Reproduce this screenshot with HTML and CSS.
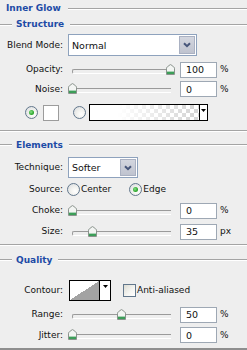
FILE: index.html
```html
<!DOCTYPE html>
<html>
<head>
<meta charset="utf-8">
<title>Inner Glow</title>
<link rel="stylesheet" href="styles.css">
</head>
<body>
<div class="panel">
  <div class="title"><span class="title-text">Inner Glow</span><span class="rule"></span></div>

  <div class="group-head gh-structure"><span class="rule lead"></span><span class="head-text">Structure</span><span class="rule"></span></div>

  <div class="row r-blend">
    <span class="lbl">Blend Mode:</span>
    <div class="select select-wide">
      <span class="select-val">Normal</span>
      <span class="select-btn"><svg width="8" height="6" viewBox="0 0 8 6"><path d="M1 1.2 L4 4.2 L7 1.2" fill="none" stroke="#46557a" stroke-width="2"/></svg></span>
    </div>
  </div>

  <div class="row r-opacity">
    <span class="lbl">Opacity:</span>
    <div class="slider"><span class="thumb" style="left:98px"><svg width="9" height="11" viewBox="0 0 9 11"><path d="M0.5 10.5 V4.2 Q0.5 3.5 1.2 3 L4 0.8 Q4.5 0.4 5 0.8 L7.8 3 Q8.5 3.5 8.5 4.2 V10.5 Z" fill="#f3f5f3" stroke="#8a938d"/><rect x="1" y="7.6" width="7" height="2.4" fill="#3c9e58"/></svg></span></div>
    <div class="num">100</div><span class="unit">%</span>
  </div>

  <div class="row r-noise">
    <span class="lbl">Noise:</span>
    <div class="slider"><span class="thumb" style="left:0px"><svg width="9" height="11" viewBox="0 0 9 11"><path d="M0.5 10.5 V4.2 Q0.5 3.5 1.2 3 L4 0.8 Q4.5 0.4 5 0.8 L7.8 3 Q8.5 3.5 8.5 4.2 V10.5 Z" fill="#f3f5f3" stroke="#8a938d"/><rect x="1" y="7.6" width="7" height="2.4" fill="#3c9e58"/></svg></span></div>
    <div class="num">0</div><span class="unit">%</span>
  </div>

  <div class="row r-color">
    <span class="radio checked"></span>
    <span class="swatch"></span>
    <span class="radio radio-grad"></span>
    <div class="gradbox">
      <span class="grad-fill"></span>
      <span class="drop"><svg width="5" height="3" viewBox="0 0 5 3"><path d="M0 0 H5 L2.5 3 Z" fill="#000"/></svg></span>
    </div>
  </div>

  <div class="sep sep-a"></div>

  <div class="group-head gh-elements"><span class="rule lead"></span><span class="head-text">Elements</span><span class="rule"></span></div>

  <div class="row r-technique">
    <span class="lbl">Technique:</span>
    <div class="select select-narrow">
      <span class="select-val">Softer</span>
      <span class="select-btn"><svg width="8" height="6" viewBox="0 0 8 6"><path d="M1 1.2 L4 4.2 L7 1.2" fill="none" stroke="#46557a" stroke-width="2"/></svg></span>
    </div>
  </div>

  <div class="row r-source">
    <span class="lbl lbl-source">Source:</span>
    <span class="radio"></span><span class="opt-text">Center</span>
    <span class="radio checked radio-edge"></span><span class="opt-text">Edge</span>
  </div>

  <div class="row r-choke">
    <span class="lbl">Choke:</span>
    <div class="slider"><span class="thumb" style="left:0px"><svg width="9" height="11" viewBox="0 0 9 11"><path d="M0.5 10.5 V4.2 Q0.5 3.5 1.2 3 L4 0.8 Q4.5 0.4 5 0.8 L7.8 3 Q8.5 3.5 8.5 4.2 V10.5 Z" fill="#f3f5f3" stroke="#8a938d"/><rect x="1" y="7.6" width="7" height="2.4" fill="#3c9e58"/></svg></span></div>
    <div class="num">0</div><span class="unit">%</span>
  </div>

  <div class="row r-size">
    <span class="lbl">Size:</span>
    <div class="slider"><span class="thumb" style="left:20px"><svg width="9" height="11" viewBox="0 0 9 11"><path d="M0.5 10.5 V4.2 Q0.5 3.5 1.2 3 L4 0.8 Q4.5 0.4 5 0.8 L7.8 3 Q8.5 3.5 8.5 4.2 V10.5 Z" fill="#f3f5f3" stroke="#8a938d"/><rect x="1" y="7.6" width="7" height="2.4" fill="#3c9e58"/></svg></span></div>
    <div class="num">35</div><span class="unit">px</span>
  </div>

  <div class="sep sep-b"></div>

  <div class="group-head gh-quality"><span class="rule lead"></span><span class="head-text">Quality</span><span class="rule"></span></div>

  <div class="row r-contour">
    <span class="lbl">Contour:</span>
    <div class="contour">
      <span class="contour-fill"></span>
      <span class="drop drop-contour"><svg width="5" height="3" viewBox="0 0 5 3"><path d="M0 0 H5 L2.5 3 Z" fill="#000"/></svg></span>
    </div>
    <span class="check"></span><span class="opt-text">Anti-aliased</span>
  </div>

  <div class="row r-range">
    <span class="lbl">Range:</span>
    <div class="slider"><span class="thumb" style="left:49px"><svg width="9" height="11" viewBox="0 0 9 11"><path d="M0.5 10.5 V4.2 Q0.5 3.5 1.2 3 L4 0.8 Q4.5 0.4 5 0.8 L7.8 3 Q8.5 3.5 8.5 4.2 V10.5 Z" fill="#f3f5f3" stroke="#8a938d"/><rect x="1" y="7.6" width="7" height="2.4" fill="#3c9e58"/></svg></span></div>
    <div class="num">50</div><span class="unit">%</span>
  </div>

  <div class="row r-jitter">
    <span class="lbl">Jitter:</span>
    <div class="slider"><span class="thumb" style="left:0px"><svg width="9" height="11" viewBox="0 0 9 11"><path d="M0.5 10.5 V4.2 Q0.5 3.5 1.2 3 L4 0.8 Q4.5 0.4 5 0.8 L7.8 3 Q8.5 3.5 8.5 4.2 V10.5 Z" fill="#f3f5f3" stroke="#8a938d"/><rect x="1" y="7.6" width="7" height="2.4" fill="#3c9e58"/></svg></span></div>
    <div class="num">0</div><span class="unit">%</span>
  </div>
</div>
</body>
</html>
```

FILE: styles.css
```css
* { box-sizing: border-box; margin: 0; padding: 0; }
html, body { width: 247px; height: 350px; overflow: hidden; background: #eeeeee; }
body { font-family: "DejaVu Sans", "Verdana", sans-serif; font-size: 9px; color: #111; line-height: 11px; }

.panel { height: 350px; display: flex; flex-direction: column; border-bottom: 2px solid #8e8e8e; }

.title { height: 17px; display: flex; align-items: center; padding-left: 6px; }
.title-text, .head-text { font-weight: bold; color: #1d4ba6; white-space: nowrap; }
.rule { flex: 1; height: 2px; border-top: 1px solid #a4a4a4; border-bottom: 1px solid #ffffff; }
.title .rule { margin-left: 7px; }

.group-head { display: flex; align-items: center; }
.group-head .lead { flex: none; width: 12px; margin-right: 4px; }
.group-head .head-text { margin-right: 6px; }
.gh-structure { height: 15px; }
.gh-elements { height: 24px; }
.gh-quality { height: 28px; }

.sep { height: 2px; border-top: 1px solid #a4a4a4; border-bottom: 1px solid #ffffff; }
.sep-a { margin-top: 2px; margin-bottom: 1px; }
.sep-b { margin-top: 2px; }

.row { display: flex; align-items: center; flex: none; }
.r-blend { height: 26px; }
.r-opacity { height: 23px; }
.r-noise { height: 16px; }
.r-color { height: 31px; padding-left: 25px; }
.r-technique { height: 21px; }
.r-source { height: 22px; }
.r-choke { height: 21px; }
.r-size { height: 21px; }
.r-contour { height: 33px; }
.r-range { height: 15px; }
.r-jitter { height: 26px; }

.lbl { flex: none; width: 63px; text-align: right; margin-right: 5px; white-space: nowrap; }
.lbl-source { margin-right: 4px; }

/* select */
.select { display: flex; align-items: center; background: #ffffff; border: 1px solid #8ea2bd; }
.select-wide { width: 129px; height: 22px; }
.select-narrow { width: 70px; height: 21px; }
.select-val { flex: 1; padding-left: 3px; font-size: 9.5px; }
.select-btn {
  flex: none; width: 16px; height: calc(100% - 2px); margin-right: 1px;
  display: flex; align-items: center; justify-content: center;
  background: linear-gradient(#d3d6df, #bfc3cf);
  border: 1px solid #aab1c2;
}

/* slider */
.slider { position: relative; flex: none; width: 112px; height: 100%; }
.slider::before {
  content: ""; position: absolute; left: 4px; width: 98px; top: 50%; margin-top: -1px; height: 3px;
  border-top: 1px solid #9a9a9a; border-bottom: 1px solid #ffffff; border-left: 1px solid #9a9a9a;
  border-radius: 2px 0 0 2px;
}
.thumb { position: absolute; top: 50%; margin-top: -6px; width: 9px; height: 11px; }
.thumb svg { display: block; }

.num {
  flex: none; width: 37px; height: 16px; background: #ffffff; border: 1px solid #9ea8b4;
  padding-left: 5px; display: flex; align-items: center; font-size: 9.5px;
}
.unit { margin-left: 3px; }

/* radios & checkbox */
.radio {
  flex: none; width: 13px; height: 13px; border-radius: 50%;
  border: 1px solid #62778c;
  background: radial-gradient(circle at 65% 65%, #ffffff 0, #f2f2ef 40%, #d6d9dd 100%);
  display: flex; align-items: center; justify-content: center;
}
.radio.checked::after {
  content: ""; width: 5px; height: 5px; border-radius: 50%;
  background: radial-gradient(circle at 40% 40%, #8ae08a 0, #2ea82e 60%, #1f8a1f 100%);
}
.swatch { flex: none; width: 16px; height: 16px; margin-left: 5px; background: #ffffff; border: 1px solid #9c9c9c; }
.radio-grad { margin-left: 14px; }
.radio-edge { margin-left: 18px; }
.opt-text { margin-left: 1px; white-space: nowrap; }

.gradbox {
  flex: none; margin-left: 3px; width: 119px; height: 17px; border: 1px solid #000;
  display: flex; background: #ffffff;
}
.grad-fill {
  flex: 1;
  background:
    linear-gradient(to right, #ffffff 0%, #ffffff 25%, rgba(255,255,255,0) 95%),
    repeating-conic-gradient(#d6d6d6 0 25%, #ffffff 0 50%) 0 0 / 8px 8px;
}
.drop {
  flex: none; width: 8px; border-left: 1px solid #000; background: #ffffff;
  display: flex; justify-content: center; padding-top: 4px;
}
.drop svg { display: block; }

.contour {
  flex: none; margin-left: 1px; width: 42px; height: 21px; border: 1px solid #000;
  display: flex; background: #ffffff;
}
.contour-fill { flex: 1; background: linear-gradient(to top left, #a3a3a3 50%, #ffffff 50%); }
.drop-contour { width: 11px; padding-top: 4px; }

.check {
  flex: none; width: 13px; height: 13px; margin-left: 12px;
  border: 1px solid #62778c;
  background: linear-gradient(135deg, #dcdcd4 0%, #f6f6f3 60%, #ffffff 100%);
}
```
